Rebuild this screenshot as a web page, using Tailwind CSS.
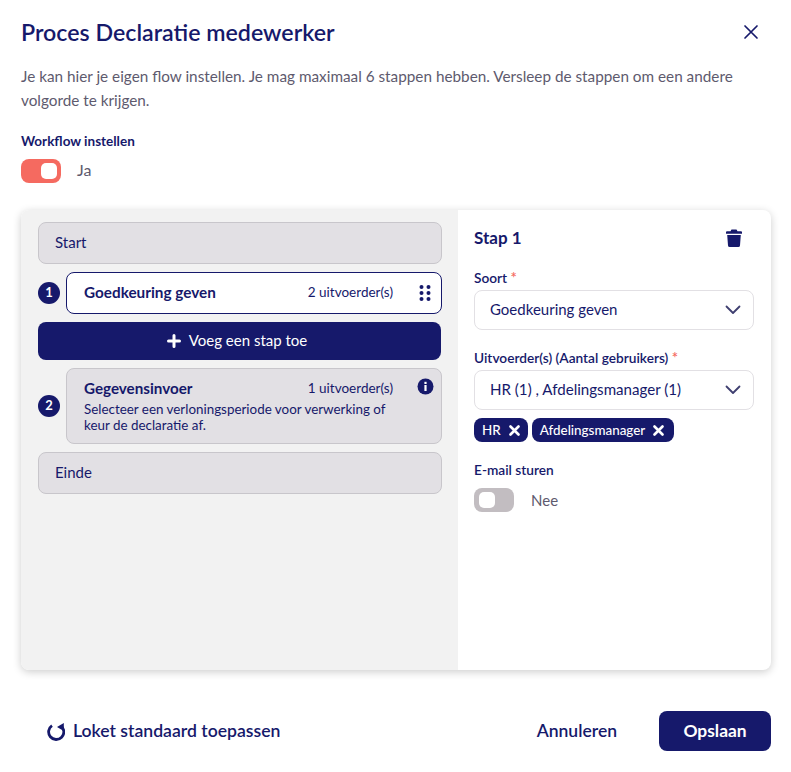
<!DOCTYPE html>
<html lang="en">
<head>
  <meta charset="UTF-8" />
  <title>Proces Declaratie medewerker</title>
  <script src="https://cdn.jsdelivr.net/npm/@tailwindcss/browser@4"></script>
</head>
<body class="bg-white font-['Lato',sans-serif] text-[#16196b] w-[791px] h-[772px] overflow-hidden">
  <div class="flex flex-col px-[21px] pr-[20px]">

    <!-- Header -->
    <div class="flex items-center justify-between h-[32px] mt-[16px]">
      <h1 class="text-[23.2px] font-semibold leading-[32px]">Proces Declaratie medewerker</h1>
      <button class="mr-[12px]">
        <svg width="16" height="16" viewBox="0 0 16 16" fill="none" stroke="#16196b" stroke-width="1.7" stroke-linecap="round"><path d="M2 2l12 12M14 2L2 14"/></svg>
      </button>
    </div>
    <p class="mt-[16px] text-[15.3px] leading-[24px] text-[#5e5a6e]">Je kan hier je eigen flow instellen. Je mag maximaal 6 stappen hebben. Versleep de stappen om een andere volgorde te krijgen.</p>

    <label class="mt-[21px] text-[13.5px] font-bold leading-[16px]">Workflow instellen</label>
    <div class="flex items-center gap-[16px] mt-[10px] h-[24px]">
      <div class="w-[40px] h-[24px] rounded-[8px] bg-[#f56a60] flex items-center justify-end pr-[4px]">
        <div class="w-[16px] h-[16px] rounded-[5px] bg-white"></div>
      </div>
      <span class="text-[16px] leading-[20px] text-[#5e5a6e] pb-[2px]">Ja</span>
    </div>

    <!-- Card -->
    <div class="flex mt-[27px] h-[460px] rounded-[8px] bg-white shadow-[0_2px_8px_rgba(0,0,0,0.2)] overflow-hidden">
      <div class="w-[437px] bg-[#f2f2f2] p-[12px_16px_0_17px] flex flex-col gap-[8px]">
        <div class="h-[42px] rounded-[8px] border border-[#c8c6cb] bg-[#e2e0e4] flex items-center pl-[16px] pb-[2px] text-[15px]">Start</div>

        <div class="flex items-center">
          <div class="w-[22px] h-[22px] rounded-full bg-[#16196b] text-white text-[13px] font-bold flex items-center justify-center mr-[6px]">1</div>
          <div class="flex-1 h-[42px] rounded-[8px] border border-[#16196b] bg-white flex items-center pl-[17px] pr-[10px]">
            <span class="text-[15.3px] font-bold pb-[2px]">Goedkeuring geven</span>
            <span class="ml-auto text-[13.5px] mr-[26px] pb-[2px]">2 uitvoerder(s)</span>
            <svg width="12" height="18" viewBox="0 0 12 18" fill="#16196b"><circle cx="2.5" cy="3" r="2"/><circle cx="9.5" cy="3" r="2"/><circle cx="2.5" cy="9" r="2"/><circle cx="9.5" cy="9" r="2"/><circle cx="2.5" cy="15" r="2"/><circle cx="9.5" cy="15" r="2"/></svg>
          </div>
        </div>

        <button class="h-[38px] mr-[1px] rounded-[8px] bg-[#16196b] text-white text-[15px] flex items-center justify-center gap-[8px] pr-[5px]">
          <svg width="14" height="14" viewBox="0 0 14 14" stroke="#fff" stroke-width="3" stroke-linecap="round"><path d="M7 1.5v11M1.5 7h11"/></svg>
          <span class="pb-[2px]">Voeg een stap toe</span>
        </button>

        <div class="flex items-center">
          <div class="w-[22px] h-[22px] rounded-full bg-[#16196b] text-white text-[13px] font-bold flex items-center justify-center mr-[6px]">2</div>
          <div class="flex-1 h-[76px] rounded-[8px] border border-[#c8c6cb] bg-[#e2e0e4] pl-[17px] pr-[7px] pt-[9px] relative">
            <div class="flex items-center h-[20px] pr-[41px]">
              <span class="text-[15.2px] font-bold">Gegevensinvoer</span>
              <span class="ml-auto text-[13.5px]">1 uitvoerder(s)</span>
            </div>
            <p class="text-[13.4px] leading-[16px] w-[312px] mt-[3px]">Selecteer een verloningsperiode voor verwerking of keur de declaratie af.</p>
            <svg class="absolute top-[9px] right-[7px]" width="17" height="17" viewBox="0 0 17 17"><circle cx="8.5" cy="8.5" r="8" fill="#16196b"/><rect x="7.4" y="7" width="2.2" height="6" fill="#fff"/><rect x="7.4" y="3.8" width="2.2" height="2.2" fill="#fff"/></svg>
          </div>
        </div>

        <div class="h-[42px] rounded-[8px] border border-[#c8c6cb] bg-[#e2e0e4] flex items-center pl-[16px] pb-[2px] text-[15px]">Einde</div>
      </div>

      <!-- Step details -->
      <div class="flex-1 pl-[16px] pr-[17px] pt-[16px] flex flex-col">
        <div class="flex items-center justify-between h-[24px]">
          <h2 class="text-[17px] font-bold">Stap 1</h2>
          <svg class="mr-[12px]" width="16" height="18" viewBox="0 0 16 18" fill="#16196b"><path d="M5.5 0.5h5l1 1.7H15a1 1 0 0 1 1 1V4.8H0V3.2a1 1 0 0 1 1-1h3.5z"/><path d="M1.2 6h13.6l-.8 10.4A1.7 1.7 0 0 1 12.3 18H3.7A1.7 1.7 0 0 1 2 16.4z"/></svg>
        </div>

        <label class="mt-[20px] h-[16px] text-[13.7px] font-semibold leading-[16px]">Soort <span class="text-[#f56a60] text-[15px] leading-none">*</span></label>
        <div class="mt-[4px] h-[40px] rounded-[8px] border border-[#e2e0e4] flex items-center pl-[15px] pr-[12px] text-[15px]">
          <span class="pb-[1px]">Goedkeuring geven</span>
          <svg class="ml-auto" width="16" height="10" viewBox="0 0 16 10" fill="none" stroke="#3f3f70" stroke-width="1.8" stroke-linecap="round" stroke-linejoin="round"><path d="M1.5 1.5L8 8l6.5-6.5"/></svg>
        </div>

        <label class="mt-[20px] h-[16px] text-[13.7px] font-semibold leading-[16px]">Uitvoerder(s) (Aantal gebruikers) <span class="text-[#f56a60] text-[15px] leading-none">*</span></label>
        <div class="mt-[4px] h-[40px] rounded-[8px] border border-[#e2e0e4] flex items-center pl-[15px] pr-[12px] text-[15.1px]">
          <span class="pb-[1px]">HR (1) , Afdelingsmanager (1)</span>
          <svg class="ml-auto" width="16" height="10" viewBox="0 0 16 10" fill="none" stroke="#3f3f70" stroke-width="1.8" stroke-linecap="round" stroke-linejoin="round"><path d="M1.5 1.5L8 8l6.5-6.5"/></svg>
        </div>

        <div class="flex gap-[4px] mt-[8px]">
          <span class="h-[24px] rounded-[8px] bg-[#16196b] text-white text-[13.4px] font-medium flex items-center pl-[8px] pr-[8px] gap-[8px]">
            HR
            <svg width="11" height="11" viewBox="0 0 11 11" stroke="#fff" stroke-width="2.6" stroke-linecap="round"><path d="M1.5 1.5l8 8M9.5 1.5l-8 8"/></svg>
          </span>
          <span class="h-[24px] rounded-[8px] bg-[#16196b] text-white text-[13.4px] font-medium flex items-center pl-[8px] pr-[10px] gap-[8px]">
            Afdelingsmanager
            <svg width="11" height="11" viewBox="0 0 11 11" stroke="#fff" stroke-width="2.6" stroke-linecap="round"><path d="M1.5 1.5l8 8M9.5 1.5l-8 8"/></svg>
          </span>
        </div>

        <label class="mt-[20px] h-[16px] text-[13.7px] font-semibold leading-[16px]">E-mail sturen</label>
        <div class="flex items-center gap-[17px] mt-[10px]">
          <div class="w-[40px] h-[24px] rounded-[8px] bg-[#c2bdc1] flex items-center pl-[5px]">
            <div class="w-[16px] h-[16px] rounded-[5px] bg-white"></div>
          </div>
          <span class="text-[15px] text-[#5e5a6e]">Nee</span>
        </div>
      </div>
    </div>

    <!-- Footer -->
    <div class="flex items-center mt-[41px] h-[40px]">
      <button class="flex items-center gap-[8px] ml-[26px] text-[17.6px] font-semibold">
        <svg width="18" height="20" viewBox="0 0 18 20" fill="none"><path d="M5 4.6A7.6 7.6 0 1 0 14 5" stroke="#16196b" stroke-width="2.8"/><path d="M16.8 2v8L10 6z" fill="#16196b"/></svg>
        Loket standaard toepassen
      </button>
      <button class="ml-auto text-[17.5px] font-semibold mr-[42px]">Annuleren</button>
      <button class="w-[112px] h-[40px] rounded-[8px] bg-[#16196b] text-white text-[17.4px] font-bold">Opslaan</button>
    </div>
  </div>
</body>
</html>
